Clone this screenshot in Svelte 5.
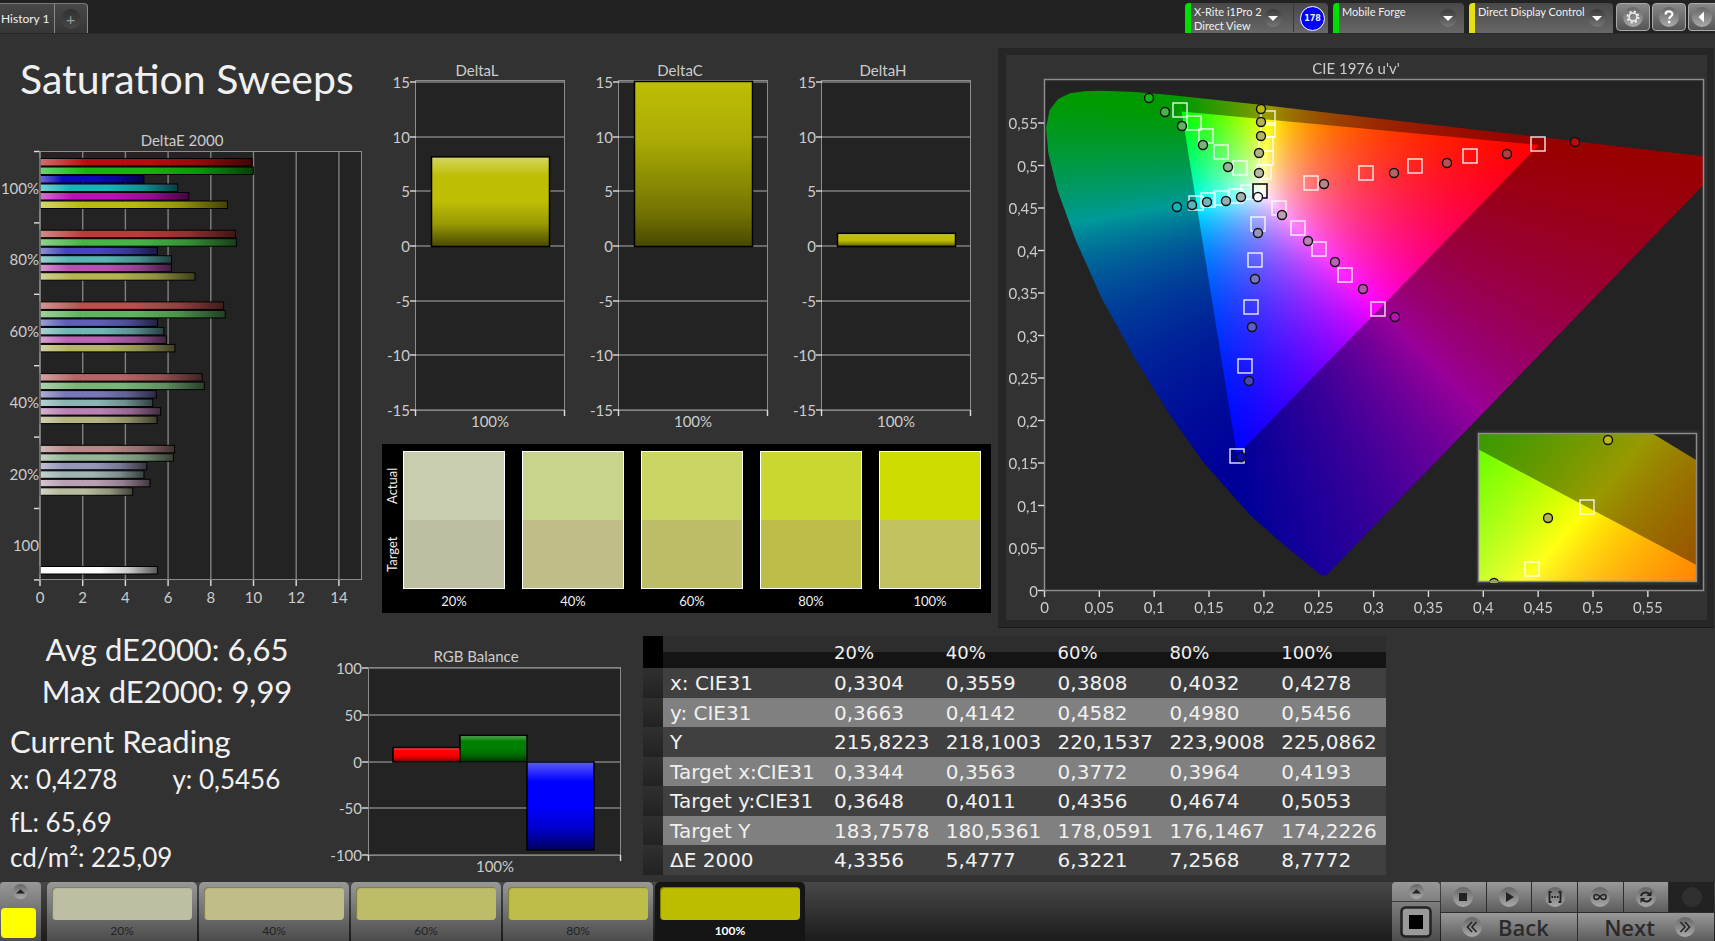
<script lang="ts">
    import { onMount } from 'svelte';

    const levels = ['20%', '40%', '60%', '80%', '100%'];

    // DeltaE per saturation level, order: R G B C M Y
    const sweeps = [
        { label: '100%', bars: [[9.93, '#b90d0d'], [9.99, '#14b414'], [4.87, '#0a0ab9'], [6.45, '#14b4b9'], [6.97, '#b90fb4'], [8.78, '#b9b90f']] },
        { label: '80%', bars: [[9.16, '#b93c3c'], [9.2, '#46b446'], [5.5, '#4646b9'], [6.16, '#5ab4b4'], [6.16, '#b950b4'], [7.26, '#b4b450']] },
        { label: '60%', bars: [[8.6, '#b95050'], [8.68, '#5fb45f'], [5.5, '#5f5fb9'], [5.8, '#73b4b4'], [5.92, '#b964b4'], [6.32, '#b4b464']] },
        { label: '40%', bars: [[7.6, '#b96464'], [7.7, '#78b478'], [5.45, '#7878b9'], [5.28, '#8cb4b4'], [5.65, '#b982b4'], [5.48, '#b4b482']] },
        { label: '20%', bars: [[6.3, '#b98787'], [6.25, '#96b496'], [5, '#9696b9'], [4.87, '#a0b4b4'], [5.15, '#b9a0b4'], [4.34, '#b9b9a0']] },
        { label: '100', bars: [[5.5, '#ffffff']] }
    ];

    const deltas = [
        { title: 'DeltaL', value: 8.2, shade: 'url(#shade-v)' },
        { title: 'DeltaC', value: 15.1, shade: 'url(#shade-v-tall)' },
        { title: 'DeltaH', value: 1.2, shade: 'url(#shade-v)' }
    ];

    const balance = [
        { x: 65, value: 15.5, color: '#ff0000' },
        { x: 132, value: 28.5, color: '#008000' },
        { x: 199, value: -94, color: '#0000ff' }
    ];

    const swatches = [
        { actual: '#c9cdb0', target: '#bebfa2' },
        { actual: '#c8d38c', target: '#bebe86' },
        { actual: '#cbd564', target: '#bdbd69' },
        { actual: '#cbd731', target: '#bdbd4a' },
        { actual: '#cfdc00', target: '#c2c360' }
    ];

    const patches = ['#bebfa2', '#bebe86', '#bdbd69', '#bdbd4a', '#bdbd00'];

    const rows = [
        ['x: CIE31', '0,3304', '0,3559', '0,3808', '0,4032', '0,4278'],
        ['y: CIE31', '0,3663', '0,4142', '0,4582', '0,4980', '0,5456'],
        ['Y', '215,8223', '218,1003', '220,1537', '223,9008', '225,0862'],
        ['Target x:CIE31', '0,3344', '0,3563', '0,3772', '0,3964', '0,4193'],
        ['Target y:CIE31', '0,3648', '0,4011', '0,4356', '0,4674', '0,5053'],
        ['Target Y', '183,7578', '180,5361', '178,0591', '176,1467', '174,2226'],
        ['ΔE 2000', '4,3356', '5,4777', '6,3221', '7,2568', '8,7772']
    ];

    const targets = [
        [174, 55], [188, 68], [200, 81], [215, 97], [234, 113],
        [262, 63], [262, 75], [260, 89], [260, 103], [258, 117],
        [305, 128], [360, 118], [409, 111], [464, 101], [532, 89],
        [190, 148], [202, 145], [215, 143], [230, 141], [242, 137],
        [273, 153], [292, 173], [313, 194], [339, 220], [372, 254],
        [252, 169], [249, 205], [245, 252], [239, 311], [231, 401]
    ];

    const readings = [
        [143, 43, '#14b414'], [159, 57, '#46b446'], [176, 71, '#5fb45f'], [197, 90, '#78b478'], [222, 112, '#96b496'],
        [255, 54, '#b9b90f'], [255, 67, '#b4b450'], [255, 81, '#b4b464'], [253, 98, '#b4b482'], [253, 118, '#b9b9a0'],
        [318, 129, '#b98787'], [388, 118, '#b96464'], [441, 108, '#b95050'], [501, 99, '#b93c3c'], [569, 87, '#b90d0d'],
        [171, 152, '#14b4b9'], [186, 150, '#5ab4b4'], [201, 147, '#73b4b4'], [220, 146, '#8cb4b4'], [235, 142, '#a0b4b4'],
        [276, 160, '#b9a0b4'], [302, 186, '#b982b4'], [329, 207, '#b964b4'], [357, 234, '#b950b4'], [389, 262, '#b90fb4'],
        [252, 178, '#9696b9'], [249, 224, '#7878b9'], [246, 272, '#5f5fb9'], [243, 326, '#4646b9'], [235, 402, '#0a0ab9']
    ];

    // spectral locus in u'v'
    const locus = [
        [0.2568, 0.0165], [0.2522, 0.0169], [0.2347, 0.035], [0.2161, 0.0549], [0.1877, 0.0871], [0.1441, 0.151],
        [0.1147, 0.2044], [0.0828, 0.2708], [0.0521, 0.3427], [0.0282, 0.4117], [0.0119, 0.4698], [0.0035, 0.5131],
        [0.0014, 0.5432], [0.0046, 0.5638], [0.0123, 0.577], [0.0231, 0.5837], [0.036, 0.5861], [0.0501, 0.5868],
        [0.0792, 0.5856], [0.1127, 0.5821], [0.1531, 0.5766], [0.2026, 0.5694], [0.2623, 0.5604], [0.3315, 0.5501],
        [0.4035, 0.5393], [0.4692, 0.5296], [0.5203, 0.5219], [0.583, 0.5125], [0.6234, 0.5065]
    ];
    const gamut = [[0.4507, 0.5229], [0.125, 0.5625], [0.1754, 0.1579]];

    const ux = (u: number) => 38.5 + 1097 * u;
    const vy = (v: number) => 535.5 - 850 * v;
    const comma = (n: number) => String(+n.toFixed(2)).replace('.', ',');
    const steps = Array.from({ length: 12 }, (_, i) => i * 0.05);

    const dx = (value: number) => 40 + 21.35 * value;

    let chart: HTMLCanvasElement;

    function colorAt(u: number, v: number) {
        const X = (9 * u) / (4 * v);
        const Z = (12 - 3 * u - 20 * v) / (4 * v);
        const rgb = [
            3.2406 * X - 1.5372 - 0.4986 * Z,
            -0.9689 * X + 1.8758 + 0.0415 * Z,
            0.0557 * X - 0.204 + 1.057 * Z
        ].map((c) => Math.max(c, 0));
        const top = Math.max(...rgb);
        return rgb.map((c) => (255 * c) / top);
    }

    function drawField(box: number[], toUv: (x: number, y: number) => number[], toPx: (u: number, v: number) => number[]) {
        const [left, top, width, height] = box;
        const layer = document.createElement('canvas');
        layer.width = width;
        layer.height = height;
        const ctx = layer.getContext('2d')!;
        const image = ctx.createImageData(width, height);
        for (let y = 0; y < height; y++) {
            for (let x = 0; x < width; x++) {
                const [u, v] = toUv(x + left, y + top);
                const [r, g, b] = colorAt(u, Math.max(v, 0.001));
                image.data.set([r, g, b, 255], (y * width + x) * 4);
            }
        }
        ctx.putImageData(image, 0, 0);

        const trace = (points: number[][]) => {
            points.forEach(([u, v], i) => {
                const [x, y] = toPx(u, v);
                if (i) ctx.lineTo(x - left, y - top);
                else ctx.moveTo(x - left, y - top);
            });
            ctx.closePath();
        };

        // dim everything outside the gamut triangle
        ctx.beginPath();
        ctx.rect(0, 0, width, height);
        trace(gamut);
        ctx.fillStyle = 'rgba(0, 0, 0, 0.4)';
        ctx.fill('evenodd');

        ctx.globalCompositeOperation = 'destination-in';
        ctx.beginPath();
        trace(locus);
        ctx.fillStyle = '#000';
        ctx.fill();
        return layer;
    }

    onMount(() => {
        const ctx = chart.getContext('2d')!;
        ctx.fillStyle = '#232323';
        ctx.fillRect(39, 25, 659, 511);
        ctx.drawImage(
            drawField([39, 25, 659, 511], (x, y) => [(x - 38.5) / 1097, (534.5 - y) / 850], (u, v) => [ux(u), vy(v) - 1]),
            39, 25
        );

        // zoomed inset is rotated around the yellow target
        const [a, b, c, d] = [3103, 3700, 835, -4700];
        const det = a * d - b * c;
        ctx.fillStyle = '#2b2b2b';
        ctx.fillRect(470, 375, 224, 155);
        ctx.fillStyle = '#232323';
        ctx.fillRect(473, 379, 218, 148);
        ctx.drawImage(
            drawField(
                [473, 379, 218, 148],
                (x, y) => [0.2039 + (d * (x - 581) - b * (y - 452)) / det, 0.5529 + (a * (y - 452) - c * (x - 581)) / det],
                (u, v) => [581 + a * (u - 0.2039) + b * (v - 0.5529), 452 + c * (u - 0.2039) + d * (v - 0.5529)]
            ),
            473, 379
        );
    });
</script>

{#snippet chevron()}
    <svg class="chevron" viewBox="0 0 18 18" aria-hidden="true">
        <circle cx="9" cy="9" r="9" fill="url(#knob-dark)" />
        <path d="M4 7h10l-5 5z" fill="#fff" />
    </svg>
{/snippet}

{#snippet square(x: number, y: number)}
    <rect x={x - 7} y={y - 7} width="14" height="14" fill="none" stroke="#fff" stroke-opacity="0.9" stroke-width="1.4" />
{/snippet}

{#snippet knob()}
    <circle cx="10" cy="10" r="10" fill="url(#knob)" />
{/snippet}

<svg class="defs" width="0" height="0" aria-hidden="true">
    <defs>
        <linearGradient id="shade-h">
            <stop offset="0" stop-color="#fff" stop-opacity="0.4" />
            <stop offset="0.22" stop-color="#fff" stop-opacity="0" />
            <stop offset="0.5" stop-color="#000" stop-opacity="0" />
            <stop offset="0.75" stop-color="#000" stop-opacity="0.2" />
            <stop offset="1" stop-color="#000" stop-opacity="0.65" />
        </linearGradient>
        <linearGradient id="shade-v" x2="0" y2="1">
            <stop offset="0" stop-color="#fff" stop-opacity="0.36" />
            <stop offset="0.22" stop-color="#fff" stop-opacity="0" />
            <stop offset="0.5" stop-color="#000" stop-opacity="0" />
            <stop offset="0.75" stop-color="#000" stop-opacity="0.2" />
            <stop offset="1" stop-color="#000" stop-opacity="0.62" />
        </linearGradient>
        <linearGradient id="shade-v-tall" x2="0" y2="1">
            <stop offset="0" stop-color="#000" stop-opacity="0" />
            <stop offset="0.35" stop-color="#000" stop-opacity="0.1" />
            <stop offset="0.8" stop-color="#000" stop-opacity="0.4" />
            <stop offset="1" stop-color="#000" stop-opacity="0.62" />
        </linearGradient>
        <linearGradient id="knob" x2="0" y2="1">
            <stop offset="0" stop-color="#666" />
            <stop offset="1" stop-color="#aaa" />
        </linearGradient>
        <linearGradient id="knob-dark" x2="0" y2="1">
            <stop offset="0" stop-color="#3a3a3a" />
            <stop offset="1" stop-color="#767676" />
        </linearGradient>
    </defs>
</svg>

<div class="app">
    <header class="topbar">
        <nav class="tabs">
            <button class="tab">History 1</button>
            <button class="tab add" aria-label="Add history"><span class="plus">+</span></button>
        </nav>
        <div class="devices">
            <div class="device meter">
                <button class="device-name">X-Rite i1Pro 2<br />Direct View</button>
                {@render chevron()}
                <div class="counter"><span class="badge">178</span></div>
            </div>
            <div class="device source">
                <select aria-label="Source"><option>Mobile Forge</option></select>
                {@render chevron()}
            </div>
            <div class="device display">
                <select aria-label="Display"><option>Direct Display Control</option></select>
                {@render chevron()}
            </div>
            <button class="tool" aria-label="Settings">
                <svg viewBox="0 0 20 20">
                    <circle cx="10" cy="10" r="10" fill="url(#knob)" />
                    <circle cx="10" cy="10" r="4" fill="none" stroke="#eee" stroke-width="1.6" />
                    <circle cx="10" cy="10" r="5.6" fill="none" stroke="#eee" stroke-width="1.8" stroke-dasharray="2.2 2.2" />
                </svg>
            </button>
            <button class="tool" aria-label="Help">
                <svg viewBox="0 0 20 20">
                    <circle cx="10" cy="10" r="10" fill="url(#knob)" />
                    <path d="M6.6 7.4c0-4 6.8-4 6.8-.3 0 2.4-3.2 2.4-3.2 5" fill="none" stroke="#fff" stroke-width="2.2" />
                    <circle cx="10.2" cy="15" r="1.4" fill="#fff" />
                </svg>
            </button>
            <button class="tool last" aria-label="Collapse">
                <svg viewBox="0 0 20 20">
                    <circle cx="10" cy="10" r="10" fill="url(#knob)" />
                    <path d="M12 4.5v11L6.5 10z" fill="#fff" />
                </svg>
            </button>
        </div>
    </header>

    <main>
        <div class="upper">
            <section class="sweep">
                <h1>Saturation Sweeps</h1>
                <svg class="chart" viewBox="0 0 382 486" role="img" aria-label="DeltaE 2000">
                    <text x="182" y="19" text-anchor="middle">DeltaE 2000</text>
                    <rect x="39.5" y="24.5" width="322" height="428" class="plot" />
                    {#each [0, 2, 4, 6, 8, 10, 12, 14] as n}
                        <line x1={dx(n)} x2={dx(n)} y1="25" y2="453" class="grid" />
                        <line x1={dx(n)} x2={dx(n)} y1="453" y2="459" class="tick" />
                        <text x={dx(n)} y="476" text-anchor="middle">{n}</text>
                    {/each}
                    {#each [0, 1, 2, 3, 4, 5, 6] as n}
                        <line x1="34" x2="40" y1={24.5 + n * 71.4} y2={24.5 + n * 71.4} class="tick" />
                    {/each}
                    {#each sweeps as sweep, i}
                        <text x="39" y={67 + i * 71.4} text-anchor="end">{sweep.label}</text>
                        {#each sweep.bars as [value, color], j}
                            {@const y = 31.5 + i * 71.7 + (i === 5 ? 49.5 : j * 8.5)}
                            <rect x="40" y={y} width={dx(+value) - 40} height="7.5" fill={color} />
                            <rect x="40" y={y} width={dx(+value) - 40} height="7.5" fill="url(#shade-h)" stroke="#000" />
                        {/each}
                    {/each}
                    <line x1="40" x2="40" y1="24" y2="453" class="grid" />
                </svg>
            </section>

            <section class="middle">
                <div class="deltas">
                    {#each deltas as delta}
                        <svg class="chart" viewBox="0 0 203 389" role="img" aria-label={delta.title}>
                            <text x="95" y="21" text-anchor="middle">{delta.title}</text>
                            <rect x="33.5" y="25.5" width="149" height="330" class="plot" />
                            {#each [15, 10, 5, 0, -5, -10, -15] as n}
                                {@const y = Math.round(191 - n * 10.93)}
                                <line x1="34" x2="182" y1={y} y2={y} class="grid" />
                                <line x1="28" x2="34" y1={y} y2={y} class="tick" />
                                <text x="28" y={y + 6} text-anchor="end">{n}</text>
                            {/each}
                            <line x1="33.5" x2="33.5" y1="355" y2="361" class="tick" />
                            <line x1="182.5" x2="182.5" y1="355" y2="361" class="tick" />
                            <rect x="49.5" y={191.5 - delta.value * 10.93} width="118" height={delta.value * 10.93} fill="#bebe05" />
                            <rect x="49.5" y={191.5 - delta.value * 10.93} width="118" height={delta.value * 10.93} fill={delta.shade} stroke="#000" stroke-width="1.5" />
                            <text x="108" y="372" text-anchor="middle">100%</text>
                        </svg>
                    {/each}
                </div>
                <div class="compare">
                    <div class="side"><span>Target</span><span>Actual</span></div>
                    <div class="swatches">
                        {#each swatches as swatch, i}
                            <figure>
                                <div class="swatch">
                                    <div style:background={swatch.actual}></div>
                                    <div style:background={swatch.target}></div>
                                </div>
                                <figcaption>{levels[i]}</figcaption>
                            </figure>
                        {/each}
                    </div>
                </div>
            </section>

            <section class="cie">
                <div class="stack">
                    <canvas bind:this={chart} width="701" height="565"></canvas>
                    <svg class="chart" viewBox="0 0 701 565" role="img" aria-label="CIE 1976 u'v'">
                        <text x="350" y="19" text-anchor="middle">CIE 1976 u'v'</text>
                        <rect x="38.5" y="24.5" width="659" height="511" fill="none" stroke="#8c8c8c" stroke-width="1.5" />
                        {#each steps as n}
                            <line x1="32" x2="38" y1={vy(n)} y2={vy(n)} class="tick" />
                            <text x="32" y={vy(n) + 6} text-anchor="end">{comma(n)}</text>
                            <line x1={ux(n)} x2={ux(n)} y1="536" y2="542" class="tick" />
                            <text x={ux(n)} y="558" text-anchor="middle">{comma(n)}</text>
                        {/each}
                        {#each targets as [x, y]}
                            {@render square(x, y)}
                        {/each}
                        <rect x="247" y="129" width="14" height="14" fill="none" stroke="#000" stroke-width="1.5" />
                        {#each readings as [x, y, color]}
                            <circle cx={x} cy={y} r="4.5" fill={color} class="reading" />
                        {/each}
                        <circle cx="252" cy="142" r="4.5" fill="#fff" class="reading" />

                        <clipPath id="inset"><rect x="473" y="379" width="218" height="149" /></clipPath>
                        <g clip-path="url(#inset)">
                            {@render square(581, 452)}
                            {@render square(526, 514)}
                            <circle cx="602" cy="385" r="4.5" fill="#b9b90f" class="reading" />
                            <circle cx="542" cy="463" r="4.5" fill="#b4b450" class="reading" />
                            <circle cx="488" cy="528" r="4.5" fill="#b4b464" class="reading" />
                        </g>
                        <rect x="472.5" y="378.5" width="218" height="148" fill="none" stroke="#8c8c8c" stroke-width="1.5" />
                    </svg>
                </div>
            </section>
        </div>

        <div class="lower">
            <section class="stats">
                <p class="big center">Avg dE2000: 6,65</p>
                <p class="big center">Max dE2000: 9,99</p>
                <h2 class="big">Current Reading</h2>
                <p class="pair"><span>x: 0,4278</span><span>y: 0,5456</span></p>
                <p class="flux">fL: 65,69</p>
                <p>cd/m²: 225,09</p>
            </section>

            <section class="balance">
                <svg class="chart" viewBox="0 0 315 241" role="img" aria-label="RGB Balance">
                    <text x="148" y="22" text-anchor="middle">RGB Balance</text>
                    <rect x="40.5" y="27.5" width="252" height="188" class="plot" />
                    {#each [100, 50, 0, -50, -100] as n}
                        {@const y = Math.round(121.5 - n * 0.935)}
                        <line x1="40" x2="292" y1={y} y2={y} class="grid" />
                        <line x1="34" x2="40" y1={y} y2={y} class="tick" />
                        <text x="34" y={y + 6} text-anchor="end">{n}</text>
                    {/each}
                    <line x1="40.5" x2="40.5" y1="215" y2="221" class="tick" />
                    <line x1="292.5" x2="292.5" y1="215" y2="221" class="tick" />
                    {#each balance as bar}
                        {@const y = 122 - Math.max(bar.value, 0) * 0.935}
                        {@const height = Math.abs(bar.value) * 0.935}
                        <rect x={bar.x} y={y} width="67" height={height} fill={bar.color} />
                        <rect x={bar.x} y={y} width="67" height={height} fill="url(#shade-v)" stroke="#000" stroke-width="1.5" />
                    {/each}
                    <text x="167" y="232" text-anchor="middle">100%</text>
                </svg>
            </section>

            <table>
                <thead>
                    <tr>
                        <th class="marker"></th>
                        <th class="name"></th>
                        {#each levels as level}
                            <th>{level}</th>
                        {/each}
                    </tr>
                </thead>
                <tbody>
                    {#each rows as row}
                        <tr>
                            <td class="marker"></td>
                            {#each row as cell}
                                <td>{cell}</td>
                            {/each}
                        </tr>
                    {/each}
                </tbody>
            </table>
        </div>
    </main>

    <footer>
        <div class="current">
            <button class="up" aria-label="Expand patches">
                <svg viewBox="0 0 20 20">{@render knob()}<path d="M4 12.5h12L10 7z" fill="#222" /></svg>
            </button>
            <span class="chip"></span>
        </div>
        <div class="patches">
            {#each patches as color, i}
                <button class="patch" class:selected={i === 4}>
                    <span class="fill" style:background={color}></span>
                    {levels[i]}
                </button>
            {/each}
        </div>
        <div class="mode">
            <button class="up" aria-label="Expand controls">
                <svg viewBox="0 0 20 20">{@render knob()}<path d="M4 12.5h12L10 7z" fill="#222" /></svg>
            </button>
            <button class="pattern" aria-label="Pattern window">
                <svg viewBox="0 0 32 32">
                    <rect x="1.5" y="1.5" width="29" height="29" rx="4" fill="#999" stroke="#222" stroke-width="2.5" />
                    <rect x="9" y="9" width="14" height="14" fill="#000" />
                </svg>
            </button>
        </div>
        <div class="transport">
            <button aria-label="Stop">
                <svg viewBox="0 0 20 20">{@render knob()}<path d="M6 6h8v8H6z" fill="#222" /></svg>
            </button>
            <button aria-label="Play">
                <svg viewBox="0 0 20 20">{@render knob()}<path d="M7 5v10l8-5z" fill="#222" /></svg>
            </button>
            <button aria-label="Read series">
                <svg viewBox="0 0 20 20">{@render knob()}
                    <path d="M6.5 5H4.5v10h2M13.5 5h2v10h-2" fill="none" stroke="#222" stroke-width="1.8" />
                    <path d="M6.5 10h1.6M9.2 10h1.6M11.9 10h1.6" stroke="#222" stroke-width="1.8" />
                </svg>
            </button>
            <button aria-label="Read continuously">
                <svg viewBox="0 0 20 20">{@render knob()}
                    <path d="M10 10C8 7 4 6.5 4 10s4 3 6 0 6-3.5 6 0-4 3-6 0z" fill="none" stroke="#222" stroke-width="1.6" />
                </svg>
            </button>
            <button aria-label="Refresh">
                <svg viewBox="0 0 20 20">{@render knob()}
                    <path d="M5 9c.6-3.4 5.500-4.8 8.3-2M15 11c-.6 3.4-5.5 4.8-8.3 2" fill="none" stroke="#222" stroke-width="1.8" />
                    <path d="M15.5 4v5h-5zM4.500 16v-5h5z" fill="#222" />
                </svg>
            </button>
            <button class="off" aria-label="Record" disabled>
                <svg viewBox="0 0 20 20"><circle cx="10" cy="10" r="10" fill="#303030" /></svg>
            </button>
            <button class="step">
                <svg viewBox="0 0 20 20">{@render knob()}<path d="M10 5l-4.5 5 4.5 5M14.5 5L10 10l4.500 5" fill="none" stroke="#222" stroke-width="1.5" /></svg>
                Back
            </button>
            <button class="step next">
                Next
                <svg viewBox="0 0 20 20">{@render knob()}<path d="M5.5 5l4.5 5-4.5 5M10 5l4.5 5-4.5 5" fill="none" stroke="#222" stroke-width="1.5" /></svg>
            </button>
        </div>
    </footer>
</div>

<style>
    :global(body) {
        background: #323232;
    }

    .app {
        display: flex;
        flex-direction: column;
        min-height: 100vh;
        background: #323232;
        color: #f0f0f0;
        font-family: Lato, "Liberation Sans", sans-serif;
        overflow: hidden;
    }

    .defs {
        position: absolute;
    }

    button, select {
        margin: 0;
        padding: 0;
        border: none;
        font-family: inherit;
        color: inherit;
        cursor: pointer;
    }

    h1, h2, p, figure {
        margin: 0;
        font-weight: 400;
    }

    /* top bar */
    .topbar {
        display: flex;
        justify-content: space-between;
        align-items: flex-end;
        height: 33px;
        background: #222;
        border-bottom: 1px solid #282828;
    }

    .tabs, .devices {
        display: flex;
        height: 30px;
    }

    .tab {
        padding: 0 4px 0 1px;
        background: linear-gradient(#484848, #363636);
        border-top: 1px solid #777;
        border-right: 1px solid #8a8a8a;
        font-size: 12px;
    }

    .add {
        padding: 0 6px;
        border-radius: 0 4px 0 0;
    }

    .plus {
        display: block;
        width: 20px;
        height: 20px;
        border-radius: 10px;
        background: linear-gradient(#303030, #484848);
        color: #999;
        font-size: 16px;
        line-height: 19px;
    }

    .device {
        display: flex;
        align-items: center;
        box-sizing: border-box;
        margin-right: 5px;
        border-left: 6px solid #00e000;
        border-radius: 4px 4px 0 0;
        background: linear-gradient(#484848, #676767);
    }

    .device-name, select {
        align-self: stretch;
        flex: 1;
        appearance: none;
        background: none;
        padding: 1px 0 0 3px;
        text-align: left;
        font-size: 11px;
        line-height: 14px;
    }

    select {
        padding-bottom: 14px;
    }

    .meter {
        width: 143px;
    }

    .source {
        width: 131px;
    }

    .display {
        width: 144px;
        margin-right: 3px;
        border-color: #e6e010;
    }

    .chevron {
        width: 18px;
        height: 18px;
        margin-right: 7px;
    }

    .meter .chevron {
        margin-right: 11px;
    }

    .counter {
        display: flex;
        align-items: center;
        height: 28px;
        padding: 0 3px 0 6px;
        border-left: 1px solid #3a3a3a;
    }

    .badge {
        width: 23px;
        height: 23px;
        border: 1px solid #fff;
        border-radius: 50%;
        background: #00f;
        font: bold 8px/23px "DejaVu Sans", sans-serif;
        text-align: center;
    }

    .tool {
        width: 34px;
        height: 28px;
        margin-right: 2px;
        border: 1px solid #aaa;
        border-radius: 4px;
        background: linear-gradient(#888, #555);
    }

    .tool.last {
        width: 27px;
        margin-right: 0;
        border-right: none;
        border-radius: 4px 0 0 4px;
    }

    .tool svg {
        display: block;
        width: 20px;
        margin: 0 auto;
    }

    /* charts */
    main {
        flex: 1;
    }

    .upper {
        display: grid;
        grid-template-columns: 382fr 616fr 717fr;
        align-items: start;
    }

    .chart {
        display: block;
        width: 100%;
        font-size: 15px;
    }

    .chart text {
        fill: #ccc;
    }

    .plot {
        fill: #232323;
        stroke: #8c8c8c;
    }

    .grid {
        stroke: #808080;
        stroke-width: 1.4px;
    }

    .tick {
        stroke: #ddd;
        stroke-width: 1.4px;
    }

    .reading {
        stroke: #111;
        stroke-width: 1.4px;
    }

    h1 {
        padding: 22px 0 25px 20px;
        font-size: 41px;
        line-height: 46px;
        white-space: nowrap;
    }

    .middle {
        padding: 21px 7px 0 0;
    }

    .deltas {
        display: grid;
        grid-template-columns: repeat(3, 1fr);
    }

    .compare {
        display: flex;
        padding: 7px 10px 0 0;
        background: #000;
        font-size: 13px;
    }

    .side {
        display: flex;
        justify-content: space-around;
        height: 138px;
        writing-mode: vertical-rl;
        transform: rotate(180deg);
        line-height: 21px;
    }

    .swatches {
        display: grid;
        flex: 1;
        grid-template-columns: repeat(5, 1fr);
        column-gap: 17px;
    }

    .swatch {
        display: grid;
        grid-template-rows: 1fr 1fr;
        height: 136px;
        border: 1px solid #fff;
    }

    figcaption {
        line-height: 24px;
        text-align: center;
    }

    .cie {
        margin: 14px 1px 0 0;
        padding: 7px 7px 7px 8px;
        background: #262626;
        border-bottom: 1px solid #1a1a1a;
    }

    .stack {
        display: grid;
        background: #323232;
    }

    .stack > * {
        grid-area: 1 / 1;
        width: 100%;
    }

    /* readings */
    .lower {
        display: grid;
        grid-template-columns: 328fr 315fr 743fr 329fr;
        align-items: start;
    }

    .stats {
        padding-left: 10px;
        font-size: 26px;
        line-height: 35px;
        white-space: nowrap;
    }

    .big {
        font-size: 31px;
        line-height: 42px;
    }

    .center {
        padding-right: 4px;
        text-align: center;
    }

    h2.big {
        padding-top: 8px;
    }

    .pair {
        display: flex;
        gap: 55px;
    }

    .flux {
        padding-top: 8px;
    }

    .balance {
        padding-top: 12px;
    }

    table {
        margin-top: 8px;
        border-collapse: collapse;
        table-layout: fixed;
        width: 100%;
        font-family: "DejaVu Sans", "Liberation Sans", sans-serif;
        font-size: 20px;
    }

    th {
        height: 32px;
        padding: 0 0 0 7px;
        background: linear-gradient(#2d2d2d 50%, #141414 50%);
        font-size: 18px;
        font-weight: 400;
        text-align: left;
    }

    td {
        height: 30px;
        padding: 0 0 0 7px;
        line-height: 24px;
        white-space: nowrap;
    }

    tbody tr {
        background: #404040;
    }

    tbody tr:nth-child(even) {
        background: #808080;
    }

    tbody tr:nth-child(even) td {
        height: 29px;
    }

    .marker {
        width: 13px;
        background: linear-gradient(#303030, #222);
    }

    th.marker {
        background: #000;
    }

    .name {
        width: 157px;
    }

    /* bottom bar */
    footer {
        display: flex;
        height: 59px;
        background: linear-gradient(#484848, #1c1c1c);
    }

    .current, .mode {
        display: flex;
        flex-direction: column;
        align-items: center;
        background: linear-gradient(#989898, #4c4c4c);
        border-radius: 4px 4px 0 0;
    }

    .current {
        width: 41px;
        margin-right: 6px;
    }

    .up {
        height: 19px;
        background: none;
    }

    .up svg {
        display: block;
        width: 15px;
    }

    .chip {
        width: 35px;
        height: 30px;
        margin: 7px 4px 0 0;
        border-radius: 4px;
        background: #ff0;
    }

    .patches {
        display: flex;
        flex: 1;
        gap: 2px;
    }

    .patch {
        display: flex;
        flex-direction: column;
        width: 150px;
        padding: 5px 5px 0;
        border-radius: 5px 5px 0 0;
        background: linear-gradient(#989898, #4c4c4c);
        color: #222;
        font-size: 12px;
        line-height: 21px;
        text-align: center;
    }

    .fill {
        align-self: stretch;
        height: 36px;
        border-radius: 4px;
        box-shadow: inset 1px 1px 1px rgba(0, 0, 0, 0.35);
    }

    .patch.selected {
        background: #151515;
        color: #fff;
        font-weight: 700;
    }

    .mode {
        width: 48px;
        margin-right: 1px;
    }

    .pattern {
        flex: 1;
        align-self: stretch;
        border-top: 1px solid #3a3a3a;
        background: none;
    }

    .pattern svg {
        display: block;
        width: 32px;
        margin: 0 auto;
    }

    .transport {
        display: grid;
        grid-template-columns: repeat(6, 1fr);
        grid-template-rows: 30px 28px;
        gap: 1px;
        width: 273px;
        margin-right: 1px;
        background: #2e2e2e;
    }

    .transport button {
        display: flex;
        align-items: center;
        justify-content: center;
        background: linear-gradient(#999, #5c5c5c);
        color: #2b2b2b;
    }

    .transport svg {
        width: 20px;
    }

    .transport .off {
        background: #222;
    }

    .transport .step {
        grid-column: span 3;
        gap: 16px;
        padding-right: 7px;
        font: 600 22px/28px "Open Sans", sans-serif;
    }

    .transport .next {
        gap: 20px;
        padding: 0 0 0 7px;
    }
</style>
